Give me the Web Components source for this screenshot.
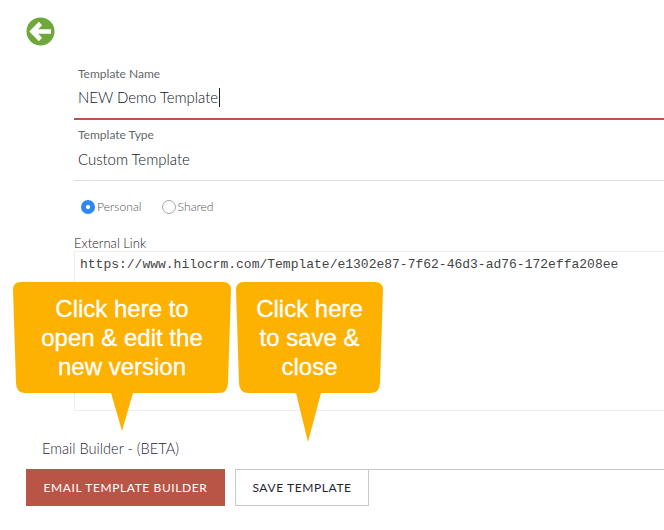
<!DOCTYPE html>
<html><head><meta charset="utf-8">
<style>
html,body{margin:0;padding:0;background:#fff;width:664px;height:530px;overflow:hidden}
body{font-family:Lato,sans-serif;position:relative}
</style></head><body>
<template id="t-field"><style>
:host{display:block;margin-left:74px;box-sizing:border-box;border-bottom:1px solid #ddd;padding:0 0 0 4px}
:host([active]){border-bottom:2px solid #b95547}
.l{font-size:12px;line-height:16px;color:#63676a;height:16px}
.v{font-size:15px;font-weight:300;line-height:20px;color:#0f1424;margin-top:5px;display:flex;align-items:center;letter-spacing:-.03px}
:host([active]) .v::after{content:"";width:1px;height:19px;background:#222;margin-left:1px}
:host(:not([active])) .v{margin-top:6px}
</style><div class="l"><slot name="label"></slot></div><div class="v"><slot></slot></div></template>

<template id="t-radio"><style>
:host{display:inline-flex;align-items:center;font-size:12.2px;font-weight:300;color:#555;line-height:16px}
i{box-sizing:border-box;width:14px;height:14px;border-radius:50%;border:1px solid #aaa;display:block;margin-right:2px}
:host([checked]) i{border:0;background:radial-gradient(circle,#fff 0 1.7px,#2f86f6 2.4px)}
</style><i></i><slot></slot></template>

<template id="t-callout"><style>
:host{display:block;position:absolute;color:#fff;font:24px/29px "Liberation Sans",Arial,sans-serif;text-align:center;-webkit-text-stroke:.3px #fff}
svg{position:absolute;left:0;top:0;overflow:visible}
div{position:relative;padding-top:12px;white-space:nowrap}
</style><svg id="s" xmlns="http://www.w3.org/2000/svg"><path id="p" fill="#fdb201"/></svg><div><slot></slot></div></template>

<template id="t-btn"><style>
:host{display:inline-flex;box-sizing:border-box;height:37px;align-items:center;justify-content:center;font-size:12px;letter-spacing:.6px;text-transform:uppercase;font-weight:400}
:host([primary]){background:#b95547;color:#fff;width:199px}
:host(:not([primary])){background:#fff;color:#1f2433;width:134px;border:1px solid #c8c8c4}
</style><slot></slot></template>

<template id="t-page"><style>
:host{display:block;width:664px;height:530px;box-sizing:border-box;padding-top:17px;position:relative;overflow:hidden}
.back{display:block;margin-left:26px;width:29px;height:29px}
.fields{margin-top:20px}
.radios{display:flex;margin:18px 0 0 81px;height:16px}
.ext{margin-left:74px;margin-top:20px;font-size:13px;font-weight:300;line-height:16px;height:16px;color:#1f2329}
.box{margin-left:74px;box-sizing:border-box;height:160px;margin-top:0;border:1px solid #eee;border-right:0;padding:5px 0 0 5px;font:13px/16px "Liberation Mono","Courier New",monospace;color:#444}
.eb{margin:29px 0 0 42px;font-size:14.6px;font-weight:300;line-height:18px;height:18px;color:#1f2738}
.bar{display:flex;margin:11px 0 0 26px;gap:10px;height:37px}
.rule{flex:1;border-top:1px solid #c8c8c4;margin-left:-10px}
</style>
<svg class="back" viewBox="0 0 29 29" xmlns="http://www.w3.org/2000/svg"><circle cx="14.5" cy="14.5" r="14" fill="#6fa83a"/><path d="M25 14.5H8M14.5 6.5l-8 8 8 8" fill="none" stroke="#fff" stroke-width="4.6" stroke-linejoin="miter"/></svg>
<div class="fields"><slot name="name"></slot><slot name="type"></slot></div>
<div class="radios"><slot name="radio"></slot></div>
<div class="ext">External Link</div>
<div class="box">https://www.hilocrm.com/Template/e1302e87-7f62-46d3-ad76-172effa208ee</div>
<div class="eb">Email Builder - (BETA)</div>
<div class="bar"><slot name="btn"></slot><div class="rule"></div></div>
<slot name="over"></slot></template>

<hilo-page>
<hilo-field slot="name" active style="height:54px"><span slot="label">Template Name</span>NEW Demo Template</hilo-field>
<hilo-field slot="type" style="height:61px;padding-top:7px"><span slot="label">Template Type</span>Custom Template</hilo-field>
<hilo-radio slot="radio" checked style="margin-right:20px">Personal</hilo-radio>
<hilo-radio slot="radio">Shared</hilo-radio>
<hilo-btn slot="btn" primary>Email Template Builder</hilo-btn>
<hilo-btn slot="btn">Save Template</hilo-btn>
<hilo-callout slot="over" style="left:13px;top:282px;width:218px" shape="1">Click here to<br>open &amp; edit the<br>new version</hilo-callout>
<hilo-callout slot="over" style="left:236px;top:282px;width:147px" shape="2">Click here<br>to save &amp;<br>close</hilo-callout>
</hilo-page>
<script>
function def(name,tid,init){customElements.define(name,class extends HTMLElement{constructor(){super();const r=this.attachShadow({mode:'open'});r.appendChild(document.getElementById(tid).content.cloneNode(true));}connectedCallback(){if(init)init(this)}})}
def('hilo-page','t-page');def('hilo-field','t-field');def('hilo-radio','t-radio');def('hilo-btn','t-btn');
def('hilo-callout','t-callout',el=>{
 const s=el.getAttribute('shape');
 const d=s==='1'
 ?'M8 0H210Q218 0 218 8L215 101Q215 111 205 111H120L109 149L98 111H13Q3 111 3 101L0 8Q0 0 8 0Z'
 :'M8 0H139Q147 0 147 8L144 101Q144 111 134 111H85L72 160L60 111H13Q3 111 3 101L0 8Q0 0 8 0Z';
 el.shadowRoot.getElementById('p').setAttribute('d',d);
 const v=el.shadowRoot.getElementById('s');v.setAttribute('width',s==='1'?218:147);v.setAttribute('height',160);
});
</script>
</body></html>
